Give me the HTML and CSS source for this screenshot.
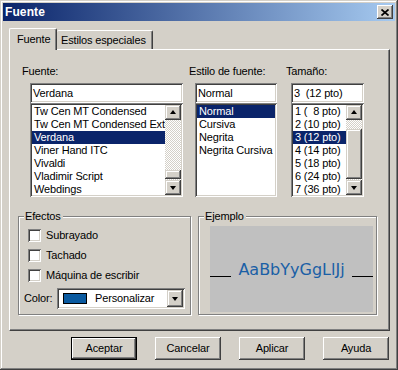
FILE: index.html
```html
<!DOCTYPE html>
<html lang="es">
<head>
<meta charset="utf-8">
<title>Fuente</title>
<link rel="stylesheet" href="styles.css">
</head>
<body>
<div class="window">
  <div class="titlebar">
    <span class="title">Fuente</span>
    <span class="close"><svg width="8" height="7" viewBox="0 0 8 7"><path d="M0.5 0.5L7.5 6.5M7.5 0.5L0.5 6.5" stroke="#000" stroke-width="1.7" fill="none"/></svg></span>
  </div>
  <div class="client">
    <div class="tabs">
      <div class="tab active">Fuente</div>
      <div class="tab">Estilos especiales</div>
    </div>
    <div class="panel">
      <div class="fields">
        <div class="col col-font">
          <div class="lbl">Fuente:</div>
          <div class="field">
            <div class="input">Verdana</div>
            <div class="list">
              <div class="items">
                <div class="item">Tw Cen MT Condensed</div>
                <div class="item">Tw Cen MT Condensed Extra Bold</div>
                <div class="item sel">Verdana</div>
                <div class="item">Viner Hand ITC</div>
                <div class="item">Vivaldi</div>
                <div class="item">Vladimir Script</div>
                <div class="item">Webdings</div>
              </div>
              <div class="sb">
                <div class="sbtn"><span class="arr up"></span></div>
                <div class="track"><div class="thumb thumb-font"></div></div>
                <div class="sbtn"><span class="arr down"></span></div>
              </div>
            </div>
          </div>
        </div>
        <div class="col col-style">
          <div class="lbl">Estilo de fuente:</div>
          <div class="field">
            <div class="input">Normal</div>
            <div class="list">
              <div class="items">
                <div class="item sel">Normal</div>
                <div class="item">Cursiva</div>
                <div class="item">Negrita</div>
                <div class="item">Negrita Cursiva</div>
              </div>
            </div>
          </div>
        </div>
        <div class="col col-size">
          <div class="lbl">Tamaño:</div>
          <div class="field">
            <div class="input pre">3  (12 pto)</div>
            <div class="list">
              <div class="items">
                <div class="item">1 (  8 pto)</div>
                <div class="item">2 (10 pto)</div>
                <div class="item sel">3 (12 pto)</div>
                <div class="item">4 (14 pto)</div>
                <div class="item">5 (18 pto)</div>
                <div class="item">6 (24 pto)</div>
                <div class="item">7 (36 pto)</div>
              </div>
              <div class="sb">
                <div class="sbtn"><span class="arr up"></span></div>
                <div class="track"><div class="thumb thumb-size"></div></div>
                <div class="sbtn"><span class="arr down"></span></div>
              </div>
            </div>
          </div>
        </div>
      </div>
      <div class="groups">
        <div class="group g-effects">
          <span class="legend">Efectos</span>
          <div class="check"><span class="box"></span><span>Subrayado</span></div>
          <div class="check"><span class="box"></span><span>Tachado</span></div>
          <div class="check"><span class="box"></span><span>Máquina de escribir</span></div>
          <div class="color-row">
            <span class="color-lbl">Color:</span>
            <div class="combo">
              <span class="swatch"></span>
              <span class="combo-text">Personalizar</span>
              <span class="dd"><span class="arr down"></span></span>
            </div>
          </div>
        </div>
        <div class="group g-sample">
          <span class="legend">Ejemplo</span>
          <div class="sample">
            <span class="rule"></span>
            <span class="sample-text">AaBbYyGgLlJj</span>
            <span class="rule"></span>
          </div>
        </div>
      </div>
    </div>
    <div class="buttons">
      <div class="btn default">Aceptar</div>
      <div class="btn">Cancelar</div>
      <div class="btn">Aplicar</div>
      <div class="btn">Ayuda</div>
    </div>
  </div>
</div>
</body>
</html>
```
FILE: styles.css
```css
html, body {
  margin: 0;
  padding: 0;
  background: #d4d0c8;
}
body {
  font-family: "Liberation Sans", Arial, sans-serif;
  font-size: 11px;
  line-height: 13px;
  letter-spacing: -0.15px;
  color: #000;
}
.window {
  width: 398px;
  height: 370px;
  box-sizing: border-box;
  padding: 3px;
  background: #d4d0c8;
  box-shadow: inset -1px -1px #404040, inset 1px 1px #d4d0c8, inset -2px -2px #808080, inset 2px 2px #fff;
}
.titlebar {
  height: 18px;
  display: flex;
  align-items: center;
  justify-content: space-between;
  background: linear-gradient(to right, #0a246a, #a6caf0);
  padding: 0 2px 0 2px;
}
.title {
  color: #fff;
  font-weight: bold;
  font-size: 12px;
  letter-spacing: 0.1px;
}
.close {
  width: 16px;
  height: 14px;
  box-sizing: border-box;
  display: flex;
  align-items: center;
  justify-content: center;
  background: #d4d0c8;
  box-shadow: inset -1px -1px #404040, inset 1px 1px #fff, inset -2px -2px #808080;
}
.close svg { display: block; margin-left: -1px; }
.client {
  padding: 7px 6px 0 6px;
}
.tabs {
  display: flex;
  align-items: flex-end;
  height: 22px;
  margin-bottom: -1px;
  position: relative;
  z-index: 1;
}
.tab {
  box-sizing: border-box;
  height: 19px;
  margin-bottom: 1px;
  padding: 3px 6px 0 4px;
  background: #d4d0c8;
  border-top: 1px solid #fff;
  border-radius: 2px 2px 0 0;
  box-shadow: inset -1px 0 #808080;
  border-right: 1px solid #404040;
  white-space: nowrap;
}
.tab.active {
  height: 22px;
  margin-bottom: 0;
  padding: 4px 7px 0 7px;
  border-left: 1px solid #fff;
  width: 48px;
}
.panel {
  box-sizing: border-box;
  width: 381px;
  height: 282px;
  border-top: 1px solid #fff;
  border-left: 1px solid #fff;
  border-right: 1px solid #404040;
  border-bottom: 1px solid #404040;
  box-shadow: inset -1px -1px #808080;
}
.fields {
  display: flex;
  padding: 15px 0 0 12px;
}
.col { display: flex; flex-direction: column; }
.col-font { width: 161px; }
.col-style { width: 88px; margin-left: 6px; }
.col-size { width: 77px; margin-left: 9px; }
.lbl { height: 13px; margin-bottom: 5px; white-space: nowrap; }
.col-font .field { margin-left: 8px; width: 153px; }
.col-style .field { margin-left: 6px; width: 82px; }
.col-size .field { margin-left: 5px; width: 73px; }
.input {
  height: 20px;
  box-sizing: border-box;
  background: #fff;
  padding: 4px 3px 0 3px;
  box-shadow: inset 1px 1px #808080, inset -1px -1px #fff, inset 2px 2px #404040, inset -2px -2px #d4d0c8;
  white-space: nowrap;
  overflow: hidden;
}
.pre { white-space: pre; }
.list {
  height: 94px;
  box-sizing: border-box;
  background: #fff;
  padding: 2px;
  display: flex;
  box-shadow: inset 1px 1px #808080, inset -1px -1px #fff, inset 2px 2px #404040, inset -2px -2px #d4d0c8;
}
.items {
  flex: 1;
  overflow: hidden;
  min-width: 0;
}
.item {
  height: 13px;
  line-height: 13px;
  padding-left: 2px;
  white-space: pre;
  overflow: hidden;
}
.item.sel {
  background: #0a246a;
  color: #fff;
}
.sb {
  width: 16px;
  display: flex;
  flex-direction: column;
}
.sbtn {
  height: 15px;
  box-sizing: border-box;
  background: #d4d0c8;
  display: flex;
  align-items: center;
  justify-content: center;
  box-shadow: inset -1px -1px #404040, inset 1px 1px #d4d0c8, inset -2px -2px #808080, inset 2px 2px #fff;
}
.track {
  flex: 1;
  display: flex;
  flex-direction: column;
  justify-content: flex-end;
  background: repeating-conic-gradient(#d4d0c8 0 25%, #fff 0 50%) 0 0 / 2px 2px;
}
.thumb {
  background: #d4d0c8;
  box-shadow: inset -1px -1px #404040, inset 1px 1px #d4d0c8, inset -2px -2px #808080, inset 2px 2px #fff;
  margin-bottom: 1px;
}
.thumb-font { height: 9px; }
.thumb-size { height: 50px; }
.arr {
  width: 0;
  height: 0;
  border-left: 3.5px solid transparent;
  border-right: 3.5px solid transparent;
}
.arr.up { border-bottom: 4px solid #000; margin-top: -1px; }
.arr.down { border-top: 4px solid #000; }
.groups {
  display: flex;
  margin: 19px 0 0 8px;
  gap: 7px;
}
.group {
  position: relative;
  box-sizing: border-box;
  height: 99px;
  border: 1px solid #808080;
  box-shadow: inset 1px 1px #fff, 1px 1px #fff;
}
.legend {
  position: absolute;
  top: -7px;
  left: 5px;
  padding: 0 2px 0 1px;
  background: #d4d0c8;
  line-height: 13px;
}
.g-effects {
  width: 173px;
  padding: 12px 0 0 9px;
}
.check {
  display: flex;
  align-items: center;
  height: 13px;
  margin-bottom: 7px;
}
.box {
  width: 13px;
  height: 13px;
  box-sizing: border-box;
  background: #fff;
  margin-right: 5px;
  box-shadow: inset 1px 1px #808080, inset -1px -1px #fff, inset 2px 2px #404040, inset -2px -2px #d4d0c8;
}
.color-row {
  display: flex;
  align-items: center;
  margin: -1px 0 0 -4px;
}
.color-lbl { width: 33px; }
.combo {
  width: 128px;
  height: 21px;
  box-sizing: border-box;
  background: #fff;
  padding: 2px;
  display: flex;
  align-items: center;
  box-shadow: inset 1px 1px #808080, inset -1px -1px #fff, inset 2px 2px #404040, inset -2px -2px #d4d0c8;
}
.swatch {
  width: 24px;
  height: 11px;
  box-sizing: border-box;
  border: 1px solid #000;
  background: #0a5aa0;
  margin-left: 4px;
}
.combo-text { margin-left: 8px; flex: 1; }
.dd {
  width: 16px;
  height: 17px;
  box-sizing: border-box;
  background: #d4d0c8;
  display: flex;
  align-items: center;
  justify-content: center;
  box-shadow: inset -1px -1px #404040, inset 1px 1px #d4d0c8, inset -2px -2px #808080, inset 2px 2px #fff;
}
.g-sample {
  width: 179px;
  padding: 9px 3px 2px 11px;
}
.sample {
  height: 100%;
  background: #c0c0c0;
  display: flex;
  align-items: center;
  justify-content: space-between;
}
.rule {
  width: 21px;
  height: 1px;
  background: #000;
  margin-top: 14px;
}
.sample-text {
  font-family: "DejaVu Sans", Verdana, sans-serif;
  font-size: 16px;
  line-height: 20px;
  letter-spacing: 0;
  color: #1a5fa6;
  margin-top: 2px;
}
.buttons {
  display: flex;
  justify-content: flex-end;
  gap: 18px;
  margin-top: 6px;
}
.btn {
  width: 66px;
  height: 23px;
  box-sizing: border-box;
  display: flex;
  align-items: center;
  justify-content: center;
  background: #d4d0c8;
  box-shadow: inset -1px -1px #404040, inset 1px 1px #fff, inset -2px -2px #808080, inset 2px 2px #d4d0c8;
}
.btn.default {
  border: 1px solid #000;
  box-shadow: inset -1px -1px #404040, inset 1px 1px #fff, inset -2px -2px #808080;
}
```
